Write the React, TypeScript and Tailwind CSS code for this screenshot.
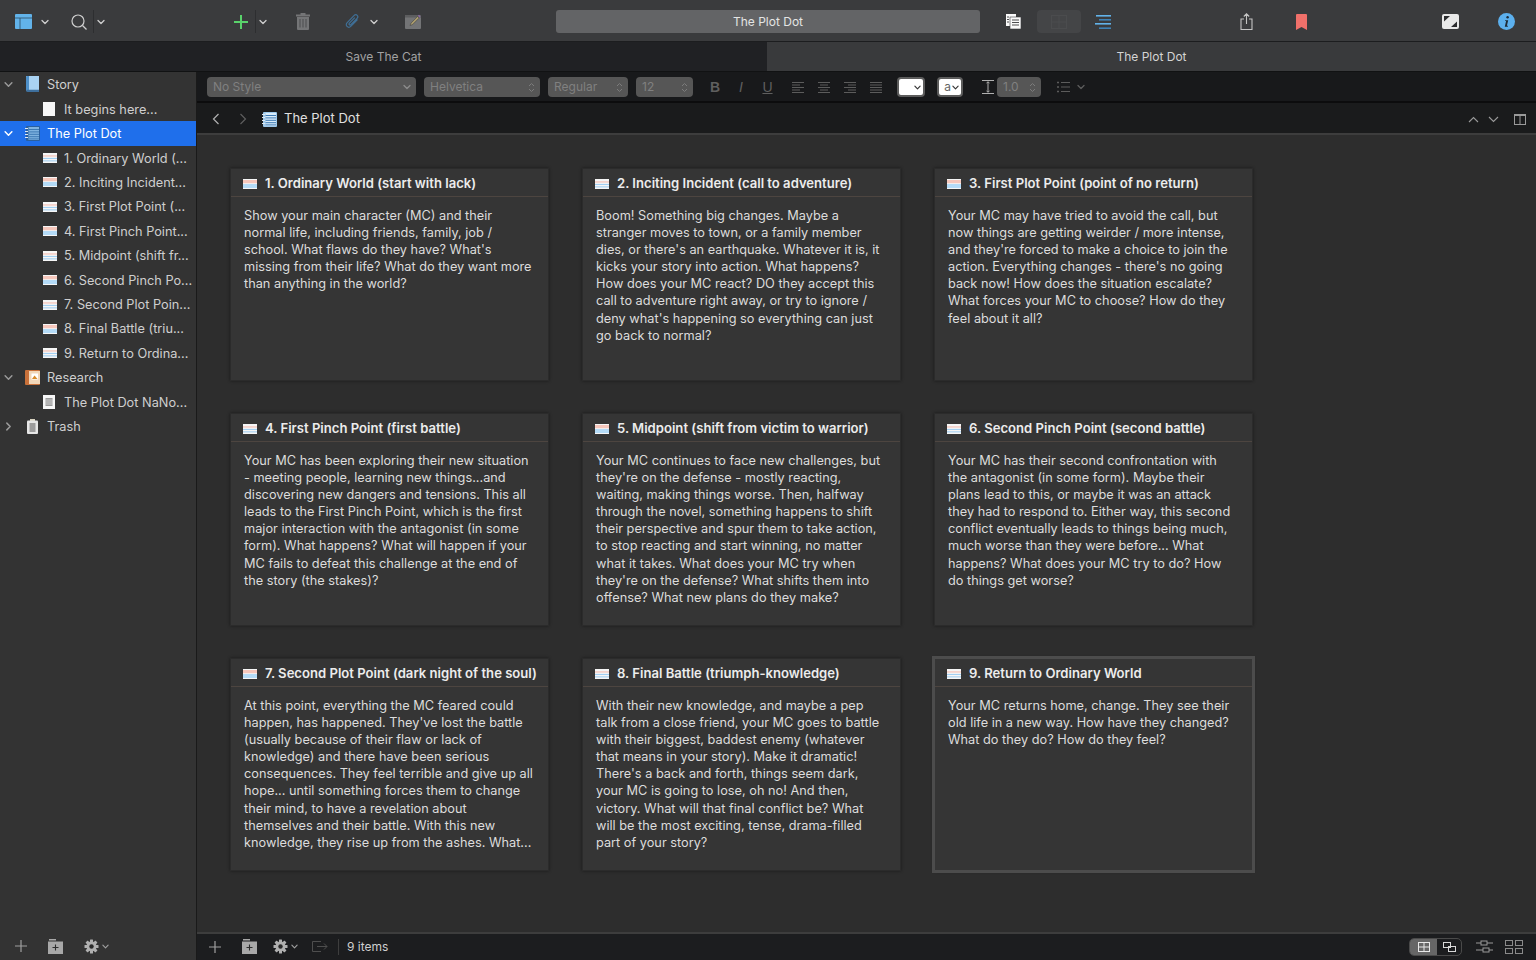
import React from 'react'

const font = { fontFamily: 'Inter, "Liberation Sans", sans-serif' }

type CardData = { title: string; lines: string[]; selected?: boolean }

const cards: CardData[] = [
  {
    title: '1. Ordinary World (start with lack)',
    lines: [
      'Show your main character (MC) and their',
      'normal life, including friends, family, job /',
      "school. What flaws do they have? What's",
      'missing from their life? What do they want more',
      'than anything in the world?',
    ],
  },
  {
    title: '2. Inciting Incident (call to adventure)',
    lines: [
      'Boom! Something big changes. Maybe a',
      'stranger moves to town, or a family member',
      "dies, or there's an earthquake. Whatever it is, it",
      'kicks your story into action. What happens?',
      'How does your MC react? DO they accept this',
      'call to adventure right away, or try to ignore /',
      "deny what's happening so everything can just",
      'go back to normal?',
    ],
  },
  {
    title: '3. First Plot Point (point of no return)',
    lines: [
      'Your MC may have tried to avoid the call, but',
      'now things are getting weirder / more intense,',
      "and they're forced to make a choice to join the",
      "action. Everything changes - there's no going",
      'back now! How does the situation escalate?',
      'What forces your MC to choose? How do they',
      'feel about it all?',
    ],
  },
  {
    title: '4. First Pinch Point (first battle)',
    lines: [
      'Your MC has been exploring their new situation',
      '- meeting people, learning new things...and',
      'discovering new dangers and tensions. This all',
      'leads to the First Pinch Point, which is the first',
      'major interaction with the antagonist (in some',
      'form). What happens? What will happen if your',
      'MC fails to defeat this challenge at the end of',
      'the story (the stakes)?',
    ],
  },
  {
    title: '5. Midpoint (shift from victim to warrior)',
    lines: [
      'Your MC continues to face new challenges, but',
      "they're on the defense - mostly reacting,",
      'waiting, making things worse. Then, halfway',
      'through the novel, something happens to shift',
      'their perspective and spur them to take action,',
      'to stop reacting and start winning, no matter',
      'what it takes. What does your MC try when',
      "they're on the defense? What shifts them into",
      'offense? What new plans do they make?',
    ],
  },
  {
    title: '6. Second Pinch Point (second battle)',
    lines: [
      'Your MC has their second confrontation with',
      'the antagonist (in some form). Maybe their',
      'plans lead to this, or maybe it was an attack',
      'they had to respond to. Either way, this second',
      'conflict eventually leads to things being much,',
      'much worse than they were before... What',
      'happens? What does your MC try to do? How',
      'do things get worse?',
    ],
  },
  {
    title: '7. Second Plot Point (dark night of the soul)',
    lines: [
      'At this point, everything the MC feared could',
      "happen, has happened. They've lost the battle",
      '(usually because of their flaw or lack of',
      'knowledge) and there have been serious',
      'consequences. They feel terrible and give up all',
      'hope... until something forces them to change',
      'their mind, to have a revelation about',
      'themselves and their battle. With this new',
      'knowledge, they rise up from the ashes. What...',
    ],
  },
  {
    title: '8. Final Battle (triumph-knowledge)',
    lines: [
      'With their new knowledge, and maybe a pep',
      'talk from a close friend, your MC goes to battle',
      'with their biggest, baddest enemy (whatever',
      'that means in your story). Make it dramatic!',
      "There's a back and forth, things seem dark,",
      'your MC is going to lose, oh no! And then,',
      'victory. What will that final conflict be? What',
      'will be the most exciting, tense, drama-filled',
      'part of your story?',
    ],
  },
  {
    title: '9. Return to Ordinary World',
    selected: true,
    lines: [
      'Your MC returns home, change. They see their',
      'old life in a new way. How have they changed?',
      'What do they do? How do they feel?',
    ],
  },
]

const Chevron = ({ className = '', color = '#cfcfcf', size = 8 }: { className?: string; color?: string; size?: number }) => (
  <svg className={className} width={size} height={size} viewBox="0 0 8 8" fill="none">
    <path d="M1 2.5 4 5.5 7 2.5" stroke={color} strokeWidth="1.3" strokeLinecap="round" strokeLinejoin="round" />
  </svg>
)

const Updown = () => (
  <svg width="7" height="11" viewBox="0 0 7 11" fill="none">
    <path d="M1 4 3.5 1.5 6 4M1 7 3.5 9.5 6 7" stroke="#7c7c7c" strokeWidth="1" />
  </svg>
)

const SceneIcon = ({ variant = 0, className = '' }: { variant?: number; className?: string }) => (
  <svg className={className} width="14" height="10" viewBox="0 0 14 10">
    <rect width="14" height="10" fill="#f6f6f6" />
    {variant === 0 ? (
      <>
        <rect y="2.4" width="14" height="1.1" fill="#f4bdb2" />
        <rect y="4.9" width="14" height="1.1" fill="#a4d0f2" />
        <rect y="7.3" width="14" height="1.1" fill="#a4d0f2" />
      </>
    ) : (
      <>
        <rect y="1" width="14" height="3.2" fill="#f6c7bc" />
        <rect y="5" width="14" height="4" fill="#b4dbf7" />
      </>
    )}
  </svg>
)

const BookIcon = () => (
  <svg width="15" height="17" viewBox="0 0 15 17">
    <path d="M2 0h12v14H3a2 2 0 0 0-2 1V1a1 1 0 0 1 1-1Z" fill="#a9d3f3" />
    <path d="M1 1.5C1 .6 1.600 0 2.500 0H4v14H2.600C1.800 14 1 14.600 1 15.500Z" fill="#4e90c9" />
    <path d="M1 15a2 2 0 0 1 2-1.200h11V16H3a2 2 0 0 1-2-1Z" fill="#3e6f9c" />
  </svg>
)

const NotebookIcon = ({ dark = false }: { dark?: boolean }) => (
  <svg width="15" height="15" viewBox="0 0 15 15">
    <rect x="1" y="0" width="14" height="15" rx="1" fill={dark ? '#2a5f9e' : '#9dc9ec'} />
    <rect x="3.500" y="1" width="10.500" height="13" fill={dark ? '#7fb3e0' : '#d9ecfa'} />
    {[3, 5.4, 7.8, 10.2, 12.4].map((y) => (
      <rect key={y} x="3.500" y={y} width="10.500" height="1" fill="#3c79b3" />
    ))}
    {[2, 5, 8, 11].map((y) => (
      <rect key={y} x="0" y={y} width="3" height="1" fill="#dfe9f2" />
    ))}
  </svg>
)

const PageIcon = ({ lined = false }: { lined?: boolean }) => (
  <svg width="12" height="14" viewBox="0 0 12 14">
    <rect width="12" height="14" fill="#f7f7f7" />
    {lined && <rect x="2.500" y="3" width="7" height="8" fill="#9a9a9a" />}
    {lined && <path d="M2.500 5h7M2.500 7h7M2.500 9h7" stroke="#f7f7f7" strokeWidth="0.6" />}
  </svg>
)

const ResearchIcon = () => (
  <svg width="15" height="15" viewBox="0 0 15 15">
    <rect width="15" height="15" rx="1" fill="#c9713a" />
    <rect x="4" y="1" width="11" height="13" fill="#f1d6b8" />
    <rect x="6.500" y="3.500" width="6.500" height="6" fill="#fff" />
    <path d="M7 9l2.500-3.500L12.500 9Z" fill="#d88b2a" />
  </svg>
)

const TrashBin = () => (
  <svg width="11" height="15" viewBox="0 0 11 15">
    <rect x="3" y="0" width="5" height="2" fill="#d7d2bf" />
    <rect x="0" y="1.500" width="11" height="13.500" rx="1" fill="#e6e6e6" />
    <rect x="2.500" y="4" width="6" height="9" fill="#9c9c9c" />
  </svg>
)

const GearIcon = () => (
  <svg width="15" height="15" viewBox="0 0 15 15">
    <g fill="#b0b0b0">
      {[0, 45, 90, 135].map((a) => (
        <rect key={a} x="6" y="0.500" width="3" height="14" rx="0.500" transform={`rotate(${a} 7.500 7.500)`} />
      ))}
      <circle cx="7.500" cy="7.500" r="5" />
    </g>
    <circle cx="7.500" cy="7.500" r="2.200" fill="#2a2a2a" />
  </svg>
)

const PlusThin = () => (
  <svg width="12" height="12" viewBox="0 0 12 12">
    <path d="M6 0v12M0 6h12" stroke="#a0a0a0" strokeWidth="1.200" />
  </svg>
)

const FolderPlus = () => (
  <svg width="15" height="15" viewBox="0 0 15 15">
    <path d="M1 0h7v1.500H1Z" fill="#a8a8a8" />
    <rect y="2.500" width="15" height="12.500" fill="#a8a8a8" />
    <path d="M7.500 5.500v6M4.500 8.500h6" stroke="#2c2c2c" strokeWidth="1.100" />
  </svg>
)

const Toolbar = () => (
  <div className="flex h-[41px] items-center bg-[#3a3b3d] pl-[15px] pt-[2px]">
    <svg width="17" height="15" viewBox="0 0 17 15">
      <rect width="17" height="15" rx="1" fill="#62b3ea" />
      <rect x="4.600" y="4" width="0.800" height="11" fill="#2f4c63" />
      <rect y="3.600" width="17" height="0.800" fill="#2f4c63" />
    </svg>
    <Chevron className="ml-[9px]" />
    <svg className="ml-[22px]" width="16" height="16" viewBox="0 0 16 16" fill="none">
      <circle cx="7" cy="7" r="6" stroke="#cfcfcf" strokeWidth="1.200" />
      <path d="M11.500 11.500 15.500 15.500" stroke="#cfcfcf" strokeWidth="1.200" />
    </svg>
    <div className="ml-[6px] h-[23px] w-px bg-[#2d2e30]" />
    <Chevron className="ml-[3px]" />
    <svg className="ml-[129px]" width="14" height="14" viewBox="0 0 14 14">
      <path d="M7 0v14M0 7h14" stroke="#59d26b" strokeWidth="2" />
    </svg>
    <div className="ml-[7px] h-[23px] w-px bg-[#2d2e30]" />
    <Chevron className="ml-[3px]" />
    <svg className="ml-[29px]" width="14" height="17" viewBox="0 0 14 17">
      <rect x="4.500" y="0" width="5" height="2" fill="#747577" />
      <rect x="0" y="1.500" width="14" height="2" fill="#747577" />
      <path d="M1 4h12v12a1 1 0 0 1-1 1H2a1 1 0 0 1-1-1Z" fill="#747577" />
      <path d="M4 6v8.500M7 6v8.500M10 6v8.500" stroke="#4b4c4e" strokeWidth="1" />
    </svg>
    <svg className="ml-[35px]" width="15" height="17" viewBox="0 0 15 17" fill="none">
      <path
        d="M12.500 6.500 6 13.200c-1.200 1.200-3 1.200-4 .2s-1-2.600.2-3.800L9.200 2.400c.9-.9 2.200-.9 3-.1s.8 2.100-.1 3L5.800 11.600c-.5.5-1.100.5-1.500.1s-.4-1 .1-1.500l5.400-5.500"
        stroke="#3f6f96"
        strokeWidth="1.200"
      />
    </svg>
    <Chevron className="ml-[10px]" />
    <svg className="ml-[27px]" width="17" height="15" viewBox="0 0 17 15">
      <rect y="1" width="16" height="14" rx="1" fill="#737476" />
      <rect y="1" width="16" height="2.500" fill="#5c5d5f" />
      <path d="M5 11.500 6 9l6.500-6.500 1.600 1.600L7.600 10.600Z" fill="#a89a6c" stroke="#3a3b3d" strokeWidth="0.500" />
      <path d="M13 1.800l1-1 1.600 1.600-1 1Z" fill="#8f6aa8" />
    </svg>
    <div className="ml-[134px] flex h-[23px] w-[424px] items-center justify-center rounded-[3px] bg-[#636466] text-[12px] text-[#e4e4e4]">
      The Plot Dot
    </div>
    <svg className="ml-[26px]" width="15" height="15" viewBox="0 0 15 15">
      <rect width="10" height="12" fill="#fafafa" />
      <rect x="4" y="3" width="11" height="12" fill="#fafafa" stroke="#3a3b3d" strokeWidth="0.600" />
      <path d="M6 6h7M6 8.500h7M6 11h7M1 3h2M1 5.500h2M1 8h2" stroke="#3a3b3d" strokeWidth="0.900" />
    </svg>
    <div className="ml-[16px] flex h-[23px] w-[44px] items-center justify-center rounded-[4px] bg-[#444547]">
      <svg width="16" height="14" viewBox="0 0 16 14" fill="none">
        <rect x="0.500" y="0.500" width="15" height="13" stroke="#4b4c4e" />
        <path d="M8 0v14M0 7h16" stroke="#4b4c4e" />
      </svg>
    </div>
    <svg className="ml-[14px]" width="16" height="16" viewBox="0 0 16 16">
      <rect x="1" y="1" width="15" height="1.600" fill="#62b3ea" />
      <rect x="4" y="5" width="12" height="1.600" fill="#3f82b5" />
      <rect x="0" y="9" width="16" height="1.600" fill="#62b3ea" />
      <rect x="4" y="13.400" width="12" height="1.600" fill="#3f82b5" />
    </svg>
    <svg className="ml-[129px]" width="13" height="17" viewBox="0 0 13 17" fill="none">
      <path d="M4 6H1v10.500h11V6H9M6.500 11V1M3.800 3.500 6.500.8l2.700 2.700" stroke="#c4c4c4" strokeWidth="1.100" />
    </svg>
    <svg className="ml-[43px]" width="11" height="16" viewBox="0 0 11 16">
      <path d="M1 0h9a1 1 0 0 1 1 1v15l-5.500-3L0 16V1a1 1 0 0 1 1-1Z" fill="#f0706a" />
    </svg>
    <svg className="ml-[135px]" width="17" height="15" viewBox="0 0 17 15">
      <rect width="17" height="15" rx="2" fill="#e9e9e9" />
      <path d="M2 2h6L2 7.500ZM15 13H9l6-5.500Z" fill="#2c2d2f" />
    </svg>
    <svg className="ml-[39px]" width="17" height="17" viewBox="0 0 17 17">
      <circle cx="8.500" cy="8.500" r="8.500" fill="#5cb0ee" />
      <circle cx="9.600" cy="4.200" r="1.200" fill="#1d2b38" />
      <path d="M7.200 7.200h3l-1.300 5.600h1.100l-.2.900H6.800l1.300-5.600H7Z" fill="#1d2b38" />
    </svg>
  </div>
)

const TabBar = () => (
  <div className="flex h-[30px] border-t border-[#1c1d1f] text-[12px]">
    <div className="flex w-[767px] items-center justify-center bg-[#202124] text-[#a2a2a2]">Save The Cat</div>
    <div className="flex flex-1 items-center justify-center bg-[#393a3c] text-[#d4d4d4]">The Plot Dot</div>
  </div>
)

type RowProps = {
  label: string
  icon: React.ReactNode
  level?: number
  open?: boolean
  closed?: boolean
  active?: boolean
}

const SideRow = ({ label, icon, level = 0, open, closed, active }: RowProps) => (
  <div
    className={`flex h-[24.43px] items-center whitespace-nowrap text-[12.75px] ${
      active ? 'bg-[#1f6feb] text-white' : 'text-[#cfcfcf]'
    }`}
  >
    <div className="flex w-[25px] shrink-0 justify-start pl-[4px]">
      {open && <Chevron size={9} color={active ? '#ffffff' : '#9a9a9a'} />}
      {closed && <Chevron className="-rotate-90" size={9} color="#9a9a9a" />}
    </div>
    {level === 1 ? (
      <>
        <div className="ml-[18px] flex w-[21px] shrink-0 items-center">{icon}</div>
        <span>{label}</span>
      </>
    ) : (
      <>
        <div className="flex w-[22px] shrink-0 items-center">{icon}</div>
        <span>{label}</span>
      </>
    )}
  </div>
)

const Sidebar = () => (
  <div className="flex w-[197px] shrink-0 flex-col justify-between border-r border-[#1a1a1a] bg-[#333333]">
    <div className="overflow-hidden pt-[0.6px]">
      <SideRow label="Story" icon={<BookIcon />} open />
      <SideRow label="It begins here..." icon={<PageIcon />} level={1} />
      <SideRow label="The Plot Dot" icon={<NotebookIcon dark />} open active />
      <SideRow label="1. Ordinary World (..." icon={<SceneIcon />} level={1} />
      <SideRow label="2. Inciting Incident..." icon={<SceneIcon variant={1} />} level={1} />
      <SideRow label="3. First Plot Point (..." icon={<SceneIcon />} level={1} />
      <SideRow label="4. First Pinch Point..." icon={<SceneIcon variant={1} />} level={1} />
      <SideRow label="5. Midpoint (shift fr..." icon={<SceneIcon />} level={1} />
      <SideRow label="6. Second Pinch Po..." icon={<SceneIcon variant={1} />} level={1} />
      <SideRow label="7. Second Plot Poin..." icon={<SceneIcon />} level={1} />
      <SideRow label="8. Final Battle (triu..." icon={<SceneIcon variant={1} />} level={1} />
      <SideRow label="9. Return to Ordina..." icon={<SceneIcon />} level={1} />
      <SideRow label="Research" icon={<ResearchIcon />} open />
      <SideRow label="The Plot Dot NaNo..." icon={<PageIcon lined />} level={1} />
      <SideRow
        label="Trash"
        icon={
          <div className="ml-[2px]">
            <TrashBin />
          </div>
        }
        closed
      />
    </div>
    <div className="flex h-[27px] items-center pb-[1px] pl-[15px]">
      <PlusThin />
      <div className="ml-[21px]">
        <FolderPlus />
      </div>
      <div className="ml-[21px]">
        <GearIcon />
      </div>
      <Chevron className="ml-[3px]" size={7} color="#a0a0a0" />
    </div>
  </div>
)

const Select = ({ label, width, kind }: { label: string; width: string; kind: 'chevron' | 'updown' }) => (
  <div className={`flex h-[20px] items-center justify-between rounded-[4px] bg-[#565656] pl-[6px] pr-[5px] text-[12px] text-[#808080] ${width}`}>
    <span>{label}</span>
    {kind === 'chevron' ? <Chevron color="#8c8c8c" /> : <Updown />}
  </div>
)

const Align = ({ d }: { d: string }) => (
  <svg width="12" height="11" viewBox="0 0 12 11" fill="none">
    <path d={d} stroke="#5c5c5c" strokeWidth="1" />
  </svg>
)

const FormatBar = () => (
  <div className="flex h-[31px] items-center border-b-2 border-[#0c0c0d] bg-[#18191b] pl-[10px] pt-[1px] text-[#5f5f5f]">
    <Select label="No Style" width="w-[209px]" kind="chevron" />
    <div className="ml-[8px]">
      <Select label="Helvetica" width="w-[116px]" kind="updown" />
    </div>
    <div className="ml-[8px]">
      <Select label="Regular" width="w-[80px]" kind="updown" />
    </div>
    <div className="ml-[8px]">
      <Select label="12" width="w-[57px]" kind="updown" />
    </div>
    <span className="ml-[17px] w-[10px] text-center text-[14px] font-bold" style={{ fontFamily: '"Liberation Sans", sans-serif' }}>B</span>
    <span className="ml-[18px] w-[6px] text-center text-[14px] italic" style={{ fontFamily: '"Liberation Sans", sans-serif' }}>I</span>
    <span className="ml-[18px] w-[11px] text-center text-[14px] underline" style={{ fontFamily: '"Liberation Sans", sans-serif' }}>U</span>
    <div className="ml-[19px] flex gap-[14px]">
      <Align d="M0 .5h12M0 3h8M0 5.500h12M0 8h8M0 10.500h12" />
      <Align d="M0 .5h12M2 3h8M0 5.500h12M2 8h8M0 10.500h12" />
      <Align d="M0 .5h12M4 3h8M0 5.500h12M4 8h8M0 10.500h12" />
      <Align d="M0 .5h12M0 3h12M0 5.500h12M0 8h12M0 10.500h12" />
    </div>
    <div className="ml-[15px] flex h-[20px] w-[28px] items-center justify-end rounded-[4px] border-2 border-[#5c5c5c] bg-white pr-[2px]">
      <Chevron size={7} color="#333333" />
    </div>
    <div className="ml-[12px] flex h-[20px] w-[26px] items-center justify-end gap-[1px] rounded-[4px] border-2 border-[#5c5c5c] bg-white pr-[2px] text-[12px] leading-none text-[#666666]">
      a
      <Chevron size={7} color="#333333" />
    </div>
    <svg className="ml-[19px]" width="12" height="14" viewBox="0 0 12 14" fill="none">
      <path d="M0 .5h12M0 13.500h12M6 2v10M4.500 3 6 1.800 7.500 3M4.500 11 6 12.200 7.500 11" stroke="#b0b0b0" strokeWidth="1" />
    </svg>
    <div className="ml-[3px]">
      <div className="flex h-[20px] w-[44px] items-center justify-between rounded-[4px] bg-[#565656] pl-[6px] pr-[5px] text-[12px] text-[#808080]">
        <span>1.0</span>
        <Updown />
      </div>
    </div>
    <svg className="ml-[16px]" width="13" height="12" viewBox="0 0 13 12" fill="none">
      <path d="M4 1.500h9M4 6h9M4 10.500h9" stroke="#5c5c5c" />
      <path d="M0 1.500h2M0 6h2M0 10.500h2" stroke="#5c5c5c" strokeWidth="1.500" />
    </svg>
    <Chevron className="ml-[7px]" color="#5c5c5c" />
  </div>
)

const HeaderBar = () => (
  <div className="flex h-[32px] items-center border-b-2 border-[#3d3d3d] bg-[#1a1b1c] pl-[15px] pr-[10px] pt-[2px]">
    <svg width="8" height="12" viewBox="0 0 8 12" fill="none">
      <path d="M6.500 1 1.500 6l5 5" stroke="#b0b0b0" strokeWidth="1.200" />
    </svg>
    <svg className="ml-[19px]" width="8" height="12" viewBox="0 0 8 12" fill="none">
      <path d="M1.500 1l5 5-5 5" stroke="#5e5e5e" strokeWidth="1.200" />
    </svg>
    <div className="ml-[15px]">
      <NotebookIcon />
    </div>
    <span className="ml-[7px] text-[13px] text-[#e0e0e0]">The Plot Dot</span>
    <div className="ml-auto flex items-center">
      <svg width="11" height="7" viewBox="0 0 11 7" fill="none">
        <path d="M1 6l4.500-4.500L10 6" stroke="#9a9a9a" strokeWidth="1.100" />
      </svg>
      <svg className="ml-[9px]" width="11" height="7" viewBox="0 0 11 7" fill="none">
        <path d="M1 1l4.500 4.500L10 1" stroke="#9a9a9a" strokeWidth="1.100" />
      </svg>
      <svg className="ml-[15px]" width="12" height="11" viewBox="0 0 12 11" fill="none">
        <rect x="0.500" y="0.500" width="11" height="10" stroke="#9a9a9a" />
        <path d="M0 1.500h12M6 1v10" stroke="#9a9a9a" />
      </svg>
    </div>
  </div>
)

const Card = ({ data, index }: { data: CardData; index: number }) => (
  <div
    className={`flex h-[213px] w-[319px] flex-col border bg-[#353535] shadow-[0_0_3px_rgba(0,0,0,0.45)] ${
      data.selected ? 'border-[#4c4c4c] outline-2 outline-[#4c4c4c]' : 'border-[#2b2b2b]'
    }`}
  >
    <div className="flex h-[28px] shrink-0 items-center border-b border-[#4d4540] pl-[12px] pt-[3px]">
      <SceneIcon variant={data.selected ? 0 : (index + 1) % 2} />
      <span className="ml-[8px] whitespace-nowrap text-[13.100px] font-semibold text-[#ececec]">{data.title}</span>
    </div>
    <div className="whitespace-nowrap pl-[13px] pt-[10px] text-[12.750px] leading-[17.100px] text-[#dcdcdc]">
      {data.lines.map((line, i) => (
        <div key={i}>{line}</div>
      ))}
    </div>
  </div>
)

const Footer = () => (
  <div className="flex h-[28px] items-center border-t-2 border-[#3d3d3d] bg-[#1c1d1f] pb-[1px] pl-[12px] pr-[13px]">
    <PlusThin />
    <div className="ml-[21px]">
      <FolderPlus />
    </div>
    <div className="ml-[16px]">
      <GearIcon />
    </div>
    <Chevron className="ml-[3px]" size={7} color="#a0a0a0" />
    <svg className="ml-[14px]" width="16" height="11" viewBox="0 0 16 11" fill="none">
      <path d="M9 .5H.5v10H9M5 5.500h10M12 2.500l3 3-3 3" stroke="#4e4e4e" />
    </svg>
    <div className="ml-[10px] h-[16px] w-px bg-[#3e3e3e]" />
    <span className="ml-[8px] text-[12px] text-[#cfcfcf]">9 items</span>
    <div className="ml-auto flex items-center">
      <div className="flex h-[18px] w-[53px] overflow-hidden rounded-[5px] border border-[#4a4a4a]">
        <div className="flex w-[27px] items-center justify-center bg-[#666666]">
          <svg width="12" height="10" viewBox="0 0 12 10" fill="none">
            <rect x="0.500" y="0.500" width="11" height="9" stroke="#e8e8e8" />
            <path d="M6 0v10M0 5h12" stroke="#e8e8e8" />
          </svg>
        </div>
        <div className="flex flex-1 items-center justify-center">
          <svg width="13" height="10" viewBox="0 0 13 10" fill="none">
            <rect x="0.500" y="0.500" width="7" height="5" stroke="#d8d8d8" />
            <rect x="5.500" y="4.500" width="7" height="5" stroke="#d8d8d8" />
          </svg>
        </div>
      </div>
      <svg className="ml-[14px]" width="17" height="13" viewBox="0 0 17 13" fill="none">
        <path d="M0 3h5M11 3h6M0 10h7M13 10h4" stroke="#9a9a9a" />
        <rect x="5" y="1" width="6" height="4" stroke="#9a9a9a" />
        <rect x="7" y="8" width="6" height="4" stroke="#9a9a9a" />
      </svg>
      <svg className="ml-[12px]" width="18" height="14" viewBox="0 0 18 14" fill="none">
        <rect x="0.500" y="0.500" width="7" height="5" stroke="#8a8a8a" />
        <rect x="10.500" y="0.500" width="7" height="5" stroke="#8a8a8a" />
        <rect x="0.500" y="8.500" width="7" height="5" stroke="#8a8a8a" />
        <rect x="10.500" y="8.500" width="7" height="5" stroke="#8a8a8a" />
      </svg>
    </div>
  </div>
)

const App: React.FC = () => (
  <div className="flex h-[960px] w-[1536px] flex-col overflow-hidden bg-[#2d2d2d]" style={font}>
    <Toolbar />
    <TabBar />
    <div className="flex min-h-0 flex-1 border-t border-[#111213]">
      <Sidebar />
      <div className="flex min-w-0 flex-1 flex-col">
        <FormatBar />
        <HeaderBar />
        <div className="min-h-0 flex-1 bg-[#2d2d2d] pl-[33px] pt-[33px]">
          <div className="grid grid-cols-[319px_319px_319px] gap-x-[33px] gap-y-[32px]">
            {cards.map((card, i) => (
              <Card key={card.title} data={card} index={i} />
            ))}
          </div>
        </div>
        <Footer />
      </div>
    </div>
  </div>
)

export default App
